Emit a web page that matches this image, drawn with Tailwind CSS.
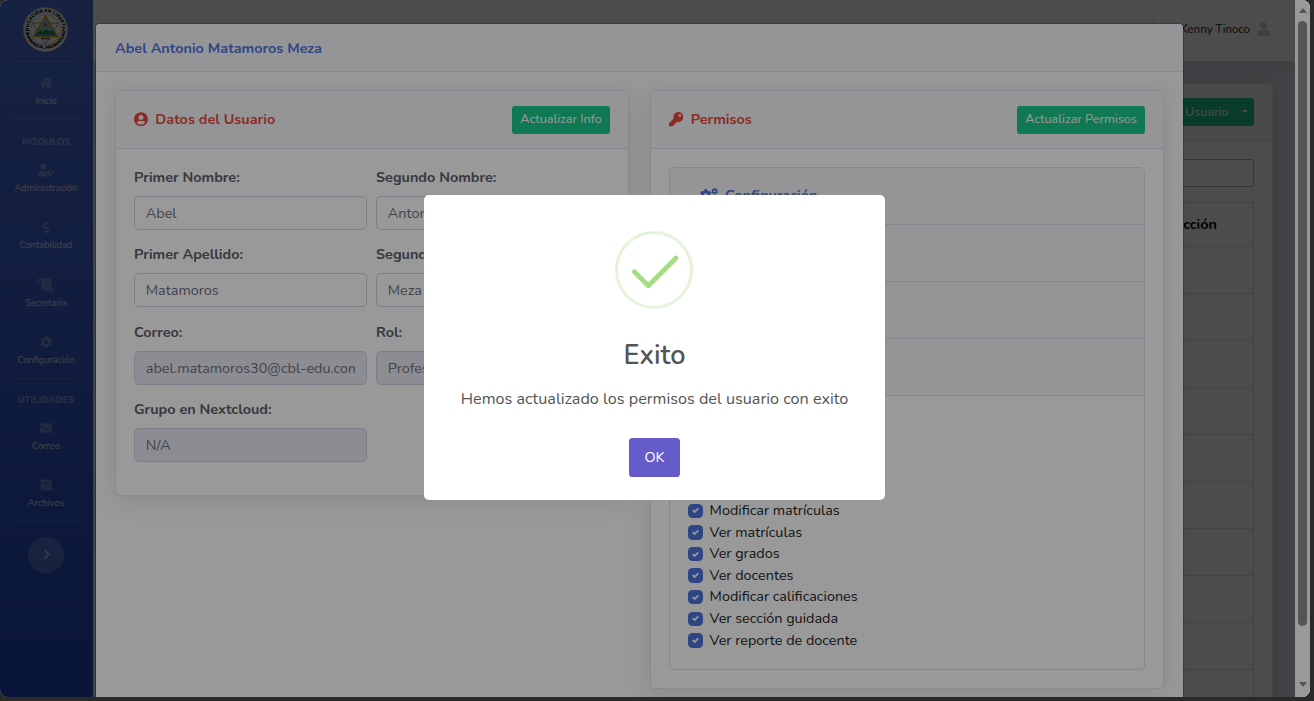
<!DOCTYPE html>
<html lang="es">
<head>
<meta charset="utf-8">
<title>Usuarios</title>
<script src="https://cdn.jsdelivr.net/npm/@tailwindcss/browser@4"></script>
</head>
<body class="h-[701px] w-[1314px] overflow-hidden bg-[#2b2a29] text-[14.4px] leading-[21.6px] text-[#5a5c69]" style="font-family:Nunito,Lato,sans-serif">

<svg class="hidden">
  <symbol id="home" viewBox="0 0 576 512"><path d="M280.37 148.26L96 300.11V464a16 16 0 0 0 16 16l112.06-.29a16 16 0 0 0 15.92-16V368a16 16 0 0 1 16-16h64a16 16 0 0 1 16 16v95.64a16 16 0 0 0 16 16.05L464 480a16 16 0 0 0 16-16V300L295.67 148.26a12.19 12.19 0 0 0-15.3 0zM571.6 251.47L488 182.56V44.05a12 12 0 0 0-12-12h-56a12 12 0 0 0-12 12v72.61L318.47 43a48 48 0 0 0-61 0L4.34 251.47a12 12 0 0 0-1.6 16.9l25.5 31A12 12 0 0 0 45.15 301l235.22-193.74a12.19 12.19 0 0 1 15.3 0L530.9 301a12 12 0 0 0 16.9-1.6l25.5-31a12 12 0 0 0-1.7-16.93z"/></symbol>
  <symbol id="user" viewBox="0 0 448 512"><path d="M224 256c70.7 0 128-57.3 128-128S294.7 0 224 0 96 57.3 96 128s57.3 128 128 128zm89.6 32h-16.7c-22.2 10.2-46.9 16-72.9 16s-50.6-5.8-72.9-16h-16.7C60.2 288 0 348.2 0 422.4V464c0 26.5 21.5 48 48 48h352c26.5 0 48-21.5 48-48v-41.6c0-74.2-60.2-134.4-134.4-134.4z"/></symbol>
  <symbol id="shield" viewBox="0 0 640 512"><path d="M622.3 271.1l-115.2-45c-4.1-1.6-12.6-3.7-22.2 0l-115.2 45c-10.7 4.2-17.7 14-17.7 24.9 0 111.6 68.7 188.8 132.9 213.9 9.6 3.7 18 1.6 22.2 0C558.4 489.9 640 420.5 640 296c0-10.9-7-20.7-17.7-24.9zM496 462.4V273.3l95.5 37.3c-5.6 87.1-60.9 135.4-95.5 151.8zM224 256c70.7 0 128-57.3 128-128S294.7 0 224 0 96 57.3 96 128s57.3 128 128 128zm96 40c0-2.5.8-4.8 1.1-7.2-2.5-.1-4.9-.8-7.5-.8h-16.7c-22.2 10.2-46.9 16-72.9 16s-50.6-5.8-72.9-16h-16.7C60.2 288 0 348.2 0 422.4V464c0 26.5 21.5 48 48 48h352c6.8 0 13.3-1.5 19.2-4-54-42.9-99.2-116.7-99.2-212z"/></symbol>
  <symbol id="dollar" viewBox="0 0 288 512"><path d="M209.2 233.4l-108-31.6C88.7 198.2 80 186.5 80 173.5c0-16.3 13.2-29.5 29.5-29.5h66.3c12.2 0 24.2 3.7 34.2 10.5 6.1 4.1 14.3 3.1 19.5-2l34.8-34c7.1-6.9 6.1-18.4-1.8-24.5C238 74.8 207.4 64.1 176 64V16c0-8.8-7.2-16-16-16h-32c-8.8 0-16 7.2-16 16v48h-2.5C45.8 64-5.4 118.7.5 183.6c4.2 46.1 39.4 83.6 83.8 96.6l102.5 30c12.5 3.7 21.2 15.3 21.2 28.3 0 16.3-13.2 29.5-29.5 29.5h-66.3C100 368 88 364.3 78 357.5c-6.1-4.1-14.3-3.1-19.5 2l-34.8 34c-7.1 6.9-6.1 18.4 1.8 24.5 24.5 19.2 55.1 29.9 86.5 30v48c0 8.8 7.2 16 16 16h32c8.8 0 16-7.2 16-16v-48.2c46.6-.9 90.3-28.6 105.7-72.7 21.5-61.6-14.6-124.8-72.5-141.7z"/></symbol>
  <symbol id="scroll" viewBox="0 0 640 512"><path d="M48 0C21.53 0 0 21.53 0 48v64c0 8.84 7.16 16 16 16h80V48C96 21.53 74.47 0 48 0zm208 412.57V352h288V96c0-52.94-43.06-96-96-96H111.59C121.74 13.41 128 29.92 128 48v368c0 38.87 34.65 69.65 74.75 63.12C234.22 474 256 444.46 256 412.57zM288 384v32c0 52.93-43.06 96-96 96h336c61.86 0 112-50.14 112-112 0-8.84-7.16-16-16-16H288z"/></symbol>
  <symbol id="cog" viewBox="0 0 512 512"><path d="M487.4 315.7l-42.6-24.6c4.3-23.2 4.3-47 0-70.2l42.6-24.6c4.9-2.8 7.1-8.6 5.5-14-11.1-35.6-30-67.8-54.7-94.6-3.8-4.1-10-5.1-14.8-2.3L380.8 110c-17.9-15.4-38.5-27.3-60.8-35.1V25.8c0-5.6-3.9-10.5-9.4-11.7-36.7-8.2-74.3-7.8-109.2 0-5.5 1.2-9.4 6.1-9.4 11.7V75c-22.2 7.9-42.8 19.8-60.8 35.1L88.7 85.5c-4.9-2.8-11-1.9-14.8 2.3-24.7 26.7-43.6 58.9-54.7 94.6-1.7 5.4.6 11.2 5.5 14L67.3 221c-4.3 23.2-4.3 47 0 70.2l-42.6 24.6c-4.9 2.8-7.1 8.6-5.5 14 11.1 35.6 30 67.8 54.7 94.6 3.8 4.1 10 5.1 14.8 2.3l42.6-24.6c17.9 15.4 38.5 27.3 60.8 35.1v49.2c0 5.6 3.9 10.5 9.4 11.7 36.7 8.2 74.3 7.8 109.2 0 5.5-1.2 9.4-6.1 9.4-11.7v-49.2c22.2-7.9 42.8-19.8 60.8-35.1l42.6 24.6c4.9 2.8 11 1.9 14.8-2.3 24.7-26.7 43.6-58.9 54.7-94.6 1.5-5.5-.7-11.3-5.6-14.1zM256 336c-44.1 0-80-35.9-80-80s35.9-80 80-80 80 35.9 80 80-35.9 80-80 80z"/></symbol>
  <symbol id="cogs" viewBox="0 0 640 512"><use href="#cog" x="-8" y="36" width="424" height="424"/><use href="#cog" x="400" y="-4" width="240" height="240"/><use href="#cog" x="400" y="276" width="240" height="240"/></symbol>
  <symbol id="envelope" viewBox="0 0 512 512"><path d="M502.3 190.8c3.9-3.1 9.7-.2 9.7 4.7V400c0 26.5-21.5 48-48 48H48c-26.5 0-48-21.5-48-48V195.6c0-5 5.7-7.8 9.7-4.7 22.4 17.4 52.1 39.5 154.1 113.6 21.1 15.4 56.7 47.8 92.2 47.6 35.7.3 72-32.8 92.3-47.6 102-74.1 131.6-96.3 154-113.7zM256 320c23.2.4 56.6-29.2 73.4-41.4 132.7-96.3 142.8-104.7 173.4-128.7 5.8-4.5 9.2-11.5 9.2-18.9v-19c0-26.5-21.5-48-48-48H48c-26.5 0-48 21.5-48 48v19c0 7.4 3.4 14.3 9.2 18.9 30.6 23.9 40.7 32.4 173.4 128.7 16.8 12.2 50.2 41.8 73.4 41.4z"/></symbol>
  <symbol id="archive" viewBox="0 0 512 512"><path d="M32 448c0 17.7 14.3 32 32 32h384c17.7 0 32-14.3 32-32V160H32v288zm160-212c0-6.6 5.4-12 12-12h104c6.6 0 12 5.4 12 12v8c0 6.6-5.4 12-12 12H204c-6.6 0-12-5.4-12-12v-8zM480 32H32C14.3 32 0 46.3 0 64v48c0 8.8 7.2 16 16 16h480c8.8 0 16-7.2 16-16V64c0-17.7-14.3-32-32-32z"/></symbol>
  <symbol id="angle" viewBox="0 0 256 512"><path d="M224.3 273l-136 136c-9.4 9.4-24.6 9.4-33.9 0l-22.6-22.6c-9.4-9.4-9.4-24.6 0-33.9l96.4-96.4-96.4-96.4c-9.4-9.4-9.4-24.6 0-33.9L54.3 103c9.4-9.4 24.6-9.4 33.9 0l136 136c9.5 9.4 9.5 24.6.1 34z"/></symbol>
  <symbol id="key" viewBox="0 0 512 512"><path d="M512 176.001C512 273.203 433.202 352 336 352c-11.22 0-22.19-1.062-32.827-3.069l-24.012 27.014A23.999 23.999 0 0 1 261.223 384H224v40c0 13.255-10.745 24-24 24h-40v40c0 13.255-10.745 24-24 24H24c-13.255 0-24-10.745-24-24v-78.059c0-6.365 2.529-12.47 7.029-16.971l161.802-161.802C163.108 213.814 160 195.271 160 176 160 78.798 238.797.001 335.999 0 433.488-.001 512 78.511 512 176.001zM336 128c0 26.51 21.49 48 48 48s48-21.49 48-48-21.49-48-48-48-48 21.49-48 48z"/></symbol>
  <symbol id="circle-user" viewBox="0 0 496 512"><path d="M248 8C111 8 0 119 0 256s111 248 248 248 248-111 248-248S385 8 248 8zm0 96c48.6 0 88 39.4 88 88s-39.4 88-88 88-88-39.4-88-88 39.4-88 88-88zm0 344c-58.7 0-111.3-26.6-146.5-68.2 18.8-35.4 55.6-59.8 98.5-59.8 2.4 0 4.8.4 7.1 1.1 13 4.2 26.6 6.9 40.9 6.9 14.3 0 28-2.7 40.9-6.9 2.3-.7 4.7-1.1 7.1-1.1 42.9 0 79.7 24.4 98.5 59.8C359.3 421.4 306.7 448 248 448z"/></symbol>
  <symbol id="check" viewBox="0 0 8 8"><path d="M6.564.75l-3.59 3.612-1.538-1.55L0 4.26l2.974 2.99L8 2.193z"/></symbol>
</svg>

<div class="relative h-[697px] w-[1310px] overflow-hidden rounded-[8px] bg-[#e0e2eb]">

  <!-- Page -->
  <div class="flex h-full w-[1295px]">
    <aside class="h-full w-[93px] shrink-0 bg-gradient-to-b from-[#4e73df] to-[#224abe] pr-px text-center text-[9.36px] leading-[14px] text-white/80">
      <div class="flex h-[61px] justify-center pr-px pt-[7px]">
        <svg class="h-[45px] w-[45px]" viewBox="0 0 90 90">
          <circle cx="45" cy="45" r="44" fill="#fff" stroke="#c9b68a" stroke-width="2"/>
          <circle cx="45" cy="45" r="30" fill="#fff" stroke="#999" stroke-width="1"/>
          <path id="arcT" d="M13 54A33.500 33.500 0 1 1 77 54" fill="none"/>
          <path id="arcB" d="M5 52A41 41 0 0 0 85 52" fill="none"/>
          <text font-size="9.5" font-weight="900" fill="#111"><textPath href="#arcT" textLength="124">EDUCACIÓN EN LIBERTAD</textPath></text>
          <text font-size="9.5" font-weight="900" fill="#111"><textPath href="#arcB" startOffset="3" textLength="106">MANAGUA, NICARAGUA</textPath></text>
          <path d="M19 32h52L45 75z" fill="none" stroke="#777" stroke-width="1.500"/>
          <path d="M45 18L69 59H21z" fill="#8fc4d8" stroke="#d9a520" stroke-width="3"/>
          <path d="M26 55l8-9 6 3 6-5 7 4 6-1 6 8z" fill="#2f8f3e"/>
          <path d="M24 57h42l-2-4H26z" fill="#2d7fd0"/>
          <path d="M35 40q10-16 20 0" fill="none" stroke="#e7c94a" stroke-width="2"/>
          <path d="M43 32h4v6h-4z" fill="#d33"/>
          <path d="M36 63h18" stroke="#555" stroke-width="3"/>
        </svg>
      </div>
      <div class="mx-[13px] h-px bg-white/15"></div>
      <div class="flex h-[57px] flex-col items-center pt-[14px]"><svg class="mb-[4px] h-[14px] w-[14px] fill-white/30"><use href="#home"/></svg>Inicio</div>
      <div class="mx-[13px] h-px bg-white/15"></div>
      <div class="h-[28.600px] pt-[14.600px] font-extrabold text-white/40">MÓDULOS</div>
      <div class="flex h-[57.5px] flex-col items-center pt-[14px]"><svg class="mb-[4px] h-[14px] w-[16px] fill-white/30"><use href="#shield"/></svg>Administración</div>
      <div class="flex h-[57.5px] flex-col items-center pt-[14px]"><svg class="mb-[4px] h-[14px] w-[14px] pt-px fill-white/30"><use href="#dollar"/></svg>Contabilidad</div>
      <div class="flex h-[57.5px] flex-col items-center pt-[14px]"><svg class="mb-[4px] h-[14px] w-[16px] fill-white/30"><use href="#scroll"/></svg>Secretaría</div>
      <div class="flex h-[56.9px] flex-col items-center pt-[14px]"><svg class="mb-[4px] h-[14px] w-[12.500px] fill-white/30"><use href="#cog"/></svg>Configuración</div>
      <div class="mx-[13px] h-px bg-white/15"></div>
      <div class="h-[28px] pt-[14px] font-extrabold text-white/40">UTILIDADES</div>
      <div class="flex h-[57.5px] flex-col items-center pt-[14px]"><svg class="mb-[4px] h-[14px] w-[12.500px] fill-white/30"><use href="#envelope"/></svg>Correo</div>
      <div class="flex h-[56.500px] flex-col items-center pt-[14px]"><svg class="mb-[4px] h-[14px] w-[12.500px] fill-white/30"><use href="#archive"/></svg>Archivos</div>
      <div class="mx-[13px] h-px bg-white/15"></div>
      <div class="mx-auto mt-[15px] flex h-[36px] w-[36px] items-center justify-center rounded-full bg-white/20"><svg class="ml-px h-[15px] w-[8px] fill-white/50"><use href="#angle"/></svg></div>
    </aside>

    <div class="flex min-w-0 flex-1 flex-col">
      <header class="relative flex h-[61px] shrink-0 items-start justify-end bg-white pr-[25px] pt-[12px] shadow-[0_2px_25px_rgba(58,59,69,0.15)]">
        <div class="mr-[26px] h-[36px] w-px bg-[#e3e6f0]"></div>
        <div class="flex h-[34px] items-center gap-[7px] text-[11.52px] text-[#222]"><span class="pt-[1.500px]">Kenny Tinoco</span><svg class="h-[14.400px] w-[13px] fill-[#d1d3e2]"><use href="#user"/></svg></div>
      </header>
      <main class="px-[22px] pt-[22px]">
        <section class="h-[640px] rounded-[5px] border border-[#e3e6f0] bg-white shadow-[0_2px_25px_rgba(58,59,69,0.15)]">
          <div class="flex h-[57px] items-center justify-end rounded-t-[4px] border-b border-[#dddfe6] bg-[#f8f9fc] px-[18px]">
            <div class="flex h-[28px] items-center rounded-[3px] bg-[#1cc88a] pl-[50px] pr-[6px] text-[12.600px] text-white">Usuario<span class="ml-[13.500px] mb-[2px] border-x-[3px] border-t-[3px] border-x-transparent border-t-white"></span></div>
          </div>
          <div class="px-[18px] pt-[18px]">
            <div class="h-[28px] rounded-[3px] border border-[#b5b5b5]"></div>
            <div class="mt-[15px] divide-y divide-[#dddfe6] border border-[#dddfe6]">
              <div class="flex h-[43.500px] items-center justify-end pr-[36px] pt-[1.500px] font-bold text-black">Acción</div>
              <div class="h-[47px]"></div><div class="h-[47px]"></div><div class="h-[47px]"></div><div class="h-[47px]"></div><div class="h-[47px]"></div><div class="h-[47px]"></div><div class="h-[47px]"></div><div class="h-[47px]"></div><div class="h-[47px]"></div><div class="h-[47px]"></div>
            </div>
          </div>
        </section>
      </main>
    </div>
  </div>

  <!-- User modal -->
  <div class="absolute inset-y-0 left-0 w-[1295px] bg-black/50"></div>
  <div class="absolute left-[95px] top-[23px] w-[1089px] rounded-[5px] border border-black/20 bg-white bg-clip-padding">
    <div class="flex h-[48px] items-center rounded-t-[4px] border-b border-[#e3e6f0] bg-[#f8f9fc] px-[19px] pt-[3px] font-bold text-[#4e73df]">Abel Antonio Matamoros Meza</div>
    <div class="grid h-[640px] grid-cols-2 items-start gap-[21px] px-[19px] pt-[18px]">

      <section class="h-[406px] rounded-[5px] border border-[#e3e6f0] bg-white shadow-[0_2px_25px_rgba(58,59,69,0.15)]">
        <div class="flex h-[58px] items-center justify-between rounded-t-[4px] border-b border-[#dddfeb] bg-[#f8f9fc] px-[18px]">
          <div class="flex items-center gap-[7.300px] font-bold text-[#e74a3b]"><svg class="h-[14.400px] w-[14px] fill-current"><use href="#circle-user"/></svg>Datos del Usuario</div>
          <div class="flex h-[28px] w-[98px] items-center justify-center rounded-[3px] bg-[#1cc88a] pb-px text-[12.600px] text-white">Actualizar Info</div>
        </div>
        <div class="grid grid-cols-[233px_233px] gap-x-[9px] gap-y-[14.200px] px-[18px] pt-[17.800px]">
          <div><div class="mb-[7.400px] font-bold">Primer Nombre:</div><div class="h-[34.200px] rounded-[5px] border border-[#d1d3e2] px-[10.800px] pt-[6px] text-[#6e707e]">Abel</div></div>
          <div><div class="mb-[7.400px] font-bold">Segundo Nombre:</div><div class="h-[34.200px] rounded-[5px] border border-[#d1d3e2] px-[10.800px] pt-[6px] text-[#6e707e]">Antonio</div></div>
          <div><div class="mb-[7.400px] font-bold">Primer Apellido:</div><div class="h-[34.200px] rounded-[5px] border border-[#d1d3e2] px-[10.800px] pt-[5.600px] text-[#6e707e]">Matamoros</div></div>
          <div><div class="mb-[7.400px] font-bold">Segundo Apellido:</div><div class="h-[34.200px] rounded-[5px] border border-[#d1d3e2] px-[10.800px] pt-[5.600px] text-[#6e707e]">Meza</div></div>
          <div class="min-w-0"><div class="mb-[7.400px] font-bold">Correo:</div><div class="h-[34.200px] rounded-[5px] border border-[#d1d3e2] bg-[#eaecf4] px-[10.800px] pt-[6.400px] text-[#6e707e]"><div class="overflow-hidden whitespace-nowrap">abel.matamoros30@cbl-edu.com</div></div></div>
          <div><div class="mb-[7.400px] font-bold">Rol:</div><div class="h-[34.200px] rounded-[5px] border border-[#d1d3e2] bg-[#eaecf4] px-[10.800px] pt-[6.400px] text-[#6e707e]">Profesor</div></div>
          <div><div class="mb-[7.400px] font-bold">Grupo en Nextcloud:</div><div class="h-[34.200px] rounded-[5px] border border-[#d1d3e2] bg-[#eaecf4] px-[10.800px] pt-[5.800px] text-[#6e707e]">N/A</div></div>
        </div>
      </section>

      <section class="h-[599px] rounded-[5px] border border-[#e3e6f0] bg-white shadow-[0_2px_25px_rgba(58,59,69,0.15)]">
        <div class="flex h-[58px] items-center justify-between rounded-t-[4px] border-b border-[#dddfeb] bg-[#f8f9fc] px-[18px]">
          <div class="flex items-center gap-[7.300px] font-bold text-[#e74a3b]"><svg class="h-[14.400px] w-[14.400px] fill-current"><use href="#key"/></svg>Permisos</div>
          <div class="flex h-[28px] w-[128px] items-center justify-center rounded-[3px] bg-[#1cc88a] pb-px text-[12.600px] text-white">Actualizar Permisos</div>
        </div>
        <div class="px-[18px] pt-[18px]">
          <div class="flex h-[503px] flex-col overflow-hidden rounded-[5px] border border-[#dddfeb]">
            <div class="flex h-[57px] items-center gap-[7px] border-b border-[#dddfeb] bg-[#f8f9fc] pl-[30px] font-bold text-[#4e73df]"><svg class="mb-px h-[14.400px] w-[18px] fill-current"><use href="#cogs"/></svg>Configuración</div>
            <div class="h-[57px] border-b border-[#dddfeb] bg-[#f8f9fc]"></div>
            <div class="h-[57px] border-b border-[#dddfeb] bg-[#f8f9fc]"></div>
            <div class="h-[57px] border-b border-[#dddfeb] bg-[#f8f9fc]"></div>
            <div class="flex flex-1 flex-col justify-end pb-[17.800px] pl-[18px] text-[#212529]">
              <div class="flex items-center gap-[6.600px]"><span class="flex h-[14.400px] w-[15px] items-center justify-center rounded-[4.500px] bg-[#4e73df]"><svg class="h-[7px] w-[7px] fill-white"><use href="#check"/></svg></span>Modificar matrículas</div>
              <div class="flex items-center gap-[6.600px]"><span class="flex h-[14.400px] w-[15px] items-center justify-center rounded-[4.500px] bg-[#4e73df]"><svg class="h-[7px] w-[7px] fill-white"><use href="#check"/></svg></span>Ver matrículas</div>
              <div class="flex items-center gap-[6.600px]"><span class="flex h-[14.400px] w-[15px] items-center justify-center rounded-[4.500px] bg-[#4e73df]"><svg class="h-[7px] w-[7px] fill-white"><use href="#check"/></svg></span>Ver grados</div>
              <div class="flex items-center gap-[6.600px]"><span class="flex h-[14.400px] w-[15px] items-center justify-center rounded-[4.500px] bg-[#4e73df]"><svg class="h-[7px] w-[7px] fill-white"><use href="#check"/></svg></span>Ver docentes</div>
              <div class="flex items-center gap-[6.600px]"><span class="flex h-[14.400px] w-[15px] items-center justify-center rounded-[4.500px] bg-[#4e73df]"><svg class="h-[7px] w-[7px] fill-white"><use href="#check"/></svg></span>Modificar calificaciones</div>
              <div class="flex items-center gap-[6.600px]"><span class="flex h-[14.400px] w-[15px] items-center justify-center rounded-[4.500px] bg-[#4e73df]"><svg class="h-[7px] w-[7px] fill-white"><use href="#check"/></svg></span>Ver sección guidada</div>
              <div class="flex items-center gap-[6.600px]"><span class="flex h-[14.400px] w-[15px] items-center justify-center rounded-[4.500px] bg-[#4e73df]"><svg class="h-[7px] w-[7px] fill-white"><use href="#check"/></svg></span>Ver reporte de docente</div>
            </div>
          </div>
        </div>
      </section>
    </div>
  </div>

  <!-- Scrollbar -->
  <div class="absolute right-0 top-0 flex h-full w-[15px] flex-col items-center bg-white">
    <span class="mt-[8px] border-x-[4.500px] border-b-[5px] border-x-transparent border-b-[#8e8e8e]"></span>
    <span class="mt-[8px] h-[605px] w-[9px] rounded-full bg-[#8e8e8e]"></span>
    <span class="mt-[56px] border-x-[4.500px] border-t-[5px] border-x-transparent border-t-[#8e8e8e]"></span>
  </div>

  <!-- Success dialog -->
  <div class="absolute inset-0 bg-black/40"></div>
  <div class="absolute left-[424px] top-[195px] flex h-[305px] w-[461px] flex-col items-center rounded-[5px] bg-white text-[#545454]">
    <svg class="mr-px mt-[36px] h-[78px] w-[78px] shrink-0" viewBox="0 0 78 78" fill="none" stroke="#a5dc86">
      <circle cx="39" cy="39" r="37.500" stroke-width="3" stroke-opacity=".3"/>
      <path d="M19.300 40.800L33.300 54.800L61 27" stroke-width="4.800" stroke-linecap="round" stroke-linejoin="round"/>
    </svg>
    <div class="mt-[27px] text-[27px] font-semibold leading-[40px]">Exito</div>
    <div class="mt-[11px] text-[16.200px] leading-[24px]">Hemos actualizado los permisos del usuario con exito</div>
    <div class="mt-[27px] flex h-[39px] w-[51px] items-center justify-center rounded-[3.600px] bg-[#665cc9] text-white">OK</div>
  </div>
</div>
</body>
</html>
